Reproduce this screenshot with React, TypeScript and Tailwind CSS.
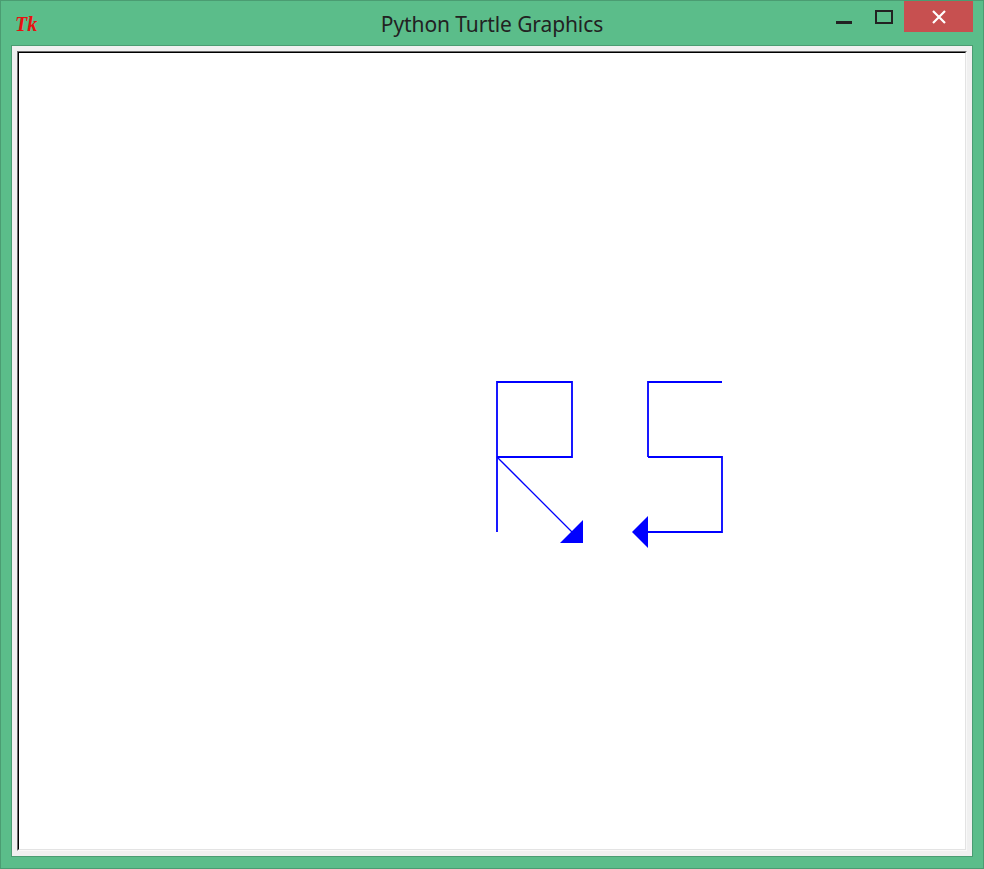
const TitleBar = () => {
  return (
    <div className="grid h-[44px] grid-cols-[1fr_auto_1fr]">
      <div className="flex items-start pl-[14px] pt-[13px]">
        <span className="text-[20px] font-bold italic leading-none text-[#e81010] [font-family:'Liberation_Serif',serif]">
          Tk
        </span>
      </div>
      <div className="flex items-center pt-[3px] text-[21px] tracking-[-0.1px] text-[#222222] [font-family:'Noto_Sans',sans-serif]">
        Python Turtle Graphics
      </div>
      <div className="flex items-start justify-end pr-[10px]">
        <button className="flex h-[30px] w-[39px] items-start justify-start pt-[20px]">
          <span className="block h-[3px] w-[16px] bg-[#222222]" />
        </button>
        <button className="flex h-[30px] w-[29px] items-start justify-start pt-[9px]">
          <span className="block h-[14px] w-[18px] border-2 border-[#222222]" />
        </button>
        <button className="flex h-[31px] w-[69px] items-center justify-center bg-[#c75050]">
          <svg width="14" height="14" viewBox="0 0 14 14">
            <path d="M1 1 L13 13 M13 1 L1 13" stroke="#ffffff" strokeWidth="2.2" />
          </svg>
        </button>
      </div>
    </div>
  );
};

const TurtleCanvas = () => {
  // page coordinates, shifted back by the canvas content origin
  return (
    <div className="relative h-full w-full overflow-hidden bg-white">
      <svg className="absolute inset-0" width="100%" height="100%">
        <g transform="translate(-19,-53)" fill="none" stroke="#0000ff">
          <path d="M497 532 L497 382 L572 382 L572 457 L497 457" strokeWidth="1.8" />
          <path d="M497 457 L572 532" strokeWidth="1.3" />
          <polygon points="583,543 560,543 583,520" fill="#0000ff" stroke="none" />
          <path d="M648 457 L648 382 L722 382" strokeWidth="1.8" />
          <path d="M648 457 L722 457 L722 532 L648 532" strokeWidth="1.8" />
          <polygon points="632,532 648,516 648,548" fill="#0000ff" stroke="none" />
        </g>
      </svg>
    </div>
  );
};

const App = () => {
  return (
    <div className="flex h-[869px] w-[984px] flex-col border border-[#4b9c72] bg-[#5bbd8a]">
      <TitleBar />
      <div className="mx-[10px] mb-[11px] flex-1 border border-[#4b9c72] bg-[#f0f0f0] p-[5px]">
        <div className="h-full w-full border-l border-t border-r border-b border-l-[#6a6a6a] border-t-[#6a6a6a] border-r-[#f8f8f8] border-b-[#f8f8f8]">
          <div className="h-full w-full border-l border-t border-r border-b border-l-black border-t-black border-r-[#e3e3e3] border-b-[#e3e3e3]">
            <TurtleCanvas />
          </div>
        </div>
      </div>
    </div>
  );
};

export default App;
